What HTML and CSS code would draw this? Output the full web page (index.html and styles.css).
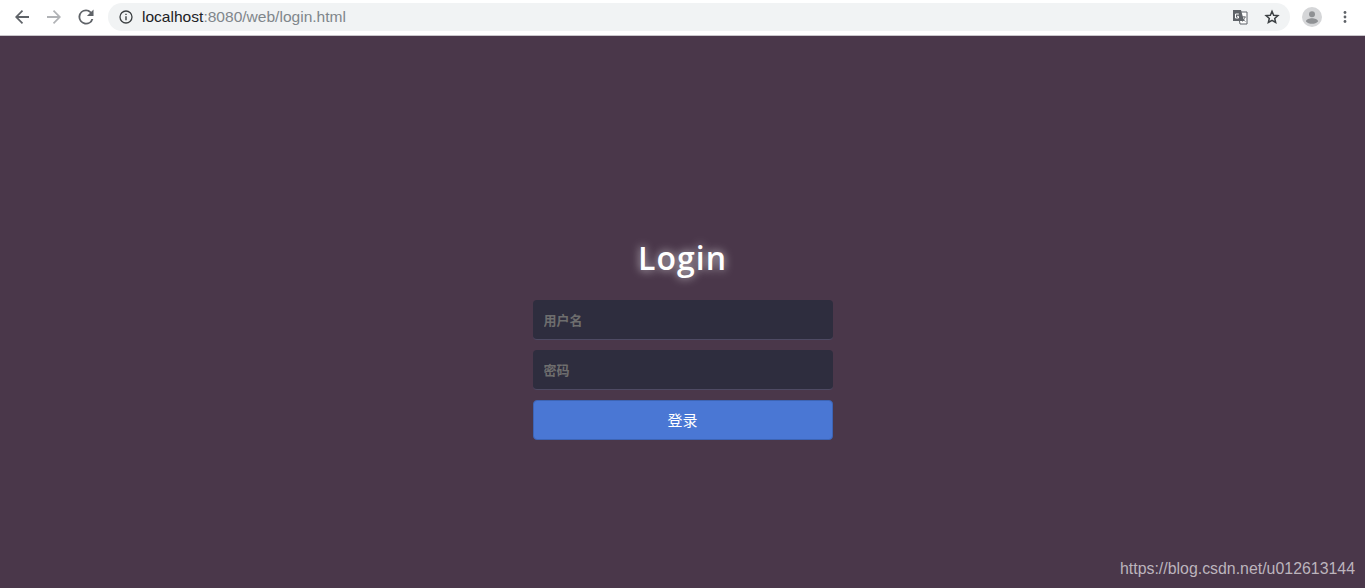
FILE: index.html
```html
<!DOCTYPE html>
<html>
	<head>
		<meta charset="utf-8">
		<title>Login</title>
		<link rel="stylesheet" href="styles.css">
	</head>
	<body>
		<header class="toolbar">
			<div class="navButtons">
				<svg class="navIcon" viewBox="0 0 16 16"><path d="M15 6.900H4.400l4.700-4.700L7.900 1 1 8l6.900 7 1.200-1.200-4.700-4.700H15z" fill="#5f6368"/></svg>
				<svg class="navIcon" viewBox="0 0 16 16"><path d="M1 6.900h10.600L6.900 2.200 8.100 1 15 8l-6.900 7-1.200-1.200 4.700-4.700H1z" fill="#b1b3b6"/></svg>
				<svg class="navIcon" viewBox="-0.500 -0.500 17 17"><path d="M13.600 2.400A7.950 7.950 0 0 0 8 0a8 8 0 1 0 7.750 10h-2.100A6 6 0 1 1 8 2c1.660 0 3.140.69 4.220 1.780L9 7h7V0z" fill="#5f6368"/></svg>
			</div>
			<div class="omnibox">
				<svg class="infoIcon" viewBox="0 0 14 14"><circle cx="7" cy="7" r="6" fill="none" stroke="#3c4043" stroke-width="1.300"/><path d="M6.300 6.200h1.400v4H6.300zM6.300 3.700h1.400v1.400H6.300z" fill="#3c4043"/></svg>
				<span class="url"><span class="host">localhost</span>:8080/web/login.html</span>
				<span class="omniActions">
					<svg class="translateIcon" viewBox="0 0 16 16">
						<path d="M6 3h9v12H8z" fill="#fff" stroke="#5f6368"/>
						<path d="M1 1h8l3 11H1z" fill="#5f6368"/>
						<path d="M6.800 5H3.500v4h3V7.300H5" fill="none" stroke="#fff" stroke-width="1"/>
						<path d="M10 8h4M12 7v1M13 8c-.400 2-1.500 3.500-3 4.500M10.800 9.500c.500 1.200 1.400 2.200 2.700 3" fill="none" stroke="#5f6368" stroke-width=".8"/>
					</svg>
					<svg class="starIcon" viewBox="0 0 16 16"><path d="M8 2.300l1.650 3.900 4.250.4-3.200 2.800.95 4.100L8 11.350l-3.650 2.150.95-4.100-3.200-2.800 4.250-.4z" fill="none" stroke="#3c4043" stroke-width="1.500"/></svg>
				</span>
			</div>
			<svg class="avatar" viewBox="0 0 20 20">
				<circle cx="10" cy="10" r="10" fill="#d5d6d8"/>
				<circle cx="10" cy="7.300" r="3" fill="#8f9194"/>
				<path d="M4 14.200c0-2 3.600-3 6-3s6 1 6 3v.3c-1.400 1.500-3.600 2.300-6 2.300s-4.600-.8-6-2.300z" fill="#8f9194"/>
			</svg>
			<svg class="menuIcon" viewBox="0 0 4 14"><circle cx="2" cy="2.500" r="1.400"/><circle cx="2" cy="7" r="1.400"/><circle cx="2" cy="11.500" r="1.400"/></svg>
		</header>
		<main class="page">
			<h1>Login</h1>
			<form class="loginForm">
				<input type="text" placeholder="用户名">
				<input type="password" placeholder="密码">
				<button type="button">登录</button>
			</form>
			<div class="watermark">https://blog.csdn.net/u012613144</div>
		</main>
	</body>
</html>
```
FILE: styles.css
```css
html, body {
	height: 100%;
}

body {
	margin: 0px;
	display: flex;
	flex-direction: column;
	font-family: "Open Sans", "Noto Sans CJK SC", sans-serif;
	background-color: #4a374a;
}

.toolbar {
	display: flex;
	align-items: center;
	flex: none;
	height: 34px;
	padding-bottom: 1px;
	background-color: #fff;
	border-bottom: 1px solid #c9c6cb;
}

.navButtons {
	display: flex;
	align-items: center;
	gap: 16px;
	padding-left: 14px;
}

.navIcon {
	width: 16px;
	height: 16px;
}

.omnibox {
	display: flex;
	align-items: center;
	width: 1182px;
	height: 28px;
	margin-left: 14px;
	padding-left: 11px;
	box-sizing: border-box;
	border-radius: 14px;
	background-color: #f1f3f4;
}

.infoIcon {
	width: 14px;
	height: 14px;
}

.url {
	margin-left: 9px;
	font-family: "Liberation Sans", sans-serif;
	font-size: 15.550px;
	color: #80868b;
}

.host {
	color: #202124;
}

.omniActions {
	display: flex;
	align-items: center;
	gap: 16px;
	margin-left: auto;
	padding-right: 10px;
}

.translateIcon {
	width: 16px;
	height: 16px;
}

.starIcon {
	width: 16px;
	height: 16px;
}

.avatar {
	width: 20px;
	height: 20px;
	margin-left: 12px;
}

.menuIcon {
	width: 4px;
	height: 14px;
	margin-left: 21px;
	fill: #5f6368;
}

.page {
	flex: 1;
	display: flex;
	flex-direction: column;
	align-items: center;
	position: relative;
	padding-top: 202px;
}

.page h1 {
	margin: 0px;
	height: 40px;
	font-size: 32px;
	font-weight: 600;
	line-height: 40px;
	letter-spacing: 1px;
	color: #fff;
	text-shadow: 0 0 10px rgba(255, 255, 255, 0.75);
}

.loginForm {
	display: flex;
	flex-direction: column;
	gap: 10px;
	width: 300px;
	margin-top: 22px;
}

.loginForm input {
	box-sizing: border-box;
	width: 100%;
	height: 40px;
	padding: 0px 11px;
	border: none;
	border-bottom: 1px solid #4e4a63;
	border-radius: 4px;
	outline: none;
	font-family: "Noto Sans CJK SC", sans-serif;
	font-size: 13px;
	font-weight: 700;
	color: #ddd;
	background-color: #2e2d3e;
}

.loginForm input::placeholder {
	color: #6e6e6e;
}

.loginForm button {
	height: 40px;
	padding: 0px 0px 2px;
	border: 1px solid #3d64b4;
	border-radius: 4px;
	font-family: "Noto Sans CJK SC", sans-serif;
	font-size: 15px;
	color: #fff;
	background-color: #4a77d4;
}

.watermark {
	position: absolute;
	right: 10px;
	bottom: 10px;
	font-family: "Liberation Sans", sans-serif;
	font-size: 15.900px;
	color: #bcb4bd;
}
```
